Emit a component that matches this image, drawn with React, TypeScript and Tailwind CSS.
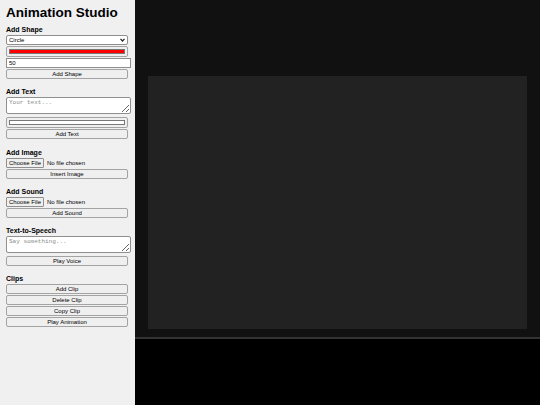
import React, { useState } from 'react';

const font = { fontFamily: '"Liberation Sans", Arial, sans-serif' };
const mono = { fontFamily: '"Liberation Mono", "DejaVu Sans Mono", monospace' };

const btn =
  'block w-[122px] h-[10px] leading-none text-[6px] text-black bg-[#efefef] border border-[#a3a3a3] rounded-[2px]';

const Heading: React.FC<{ children: React.ReactNode }> = ({ children }) => (
  <h3 className="text-[7px] font-bold leading-[8px] h-[8px] mb-[1px] text-black">{children}</h3>
);

const FilePicker: React.FC<{ accept: string }> = ({ accept }) => (
  <input
    type="file"
    accept={accept}
    className="block h-[10px] w-[122px] text-[6px] leading-none text-black mb-[1px] file:mr-[3px] file:h-[10px] file:px-[2px] file:text-[6px] file:leading-none file:bg-[#efefef] file:border file:border-solid file:border-[#8f8f8f] file:rounded-[1px]"
  />
);

const Sidebar: React.FC = () => {
  const [shape, setShape] = useState('circle');
  const [size, setSize] = useState('50');

  return (
    <aside className="w-[135px] shrink-0 h-full bg-[#f0f0f0] px-[6px] pt-[6px] overflow-hidden" style={font}>
      <h1 className="text-[13.5px] font-bold leading-[13px] h-[13px] mb-[7px] text-black">Animation Studio</h1>

      {/* Shape tools */}
      <section className="mb-[9px]">
        <Heading>Add Shape</Heading>
        <div className="relative w-[122px] h-[10px] mb-[1px]">
          <select
            value={shape}
            onChange={(e) => setShape(e.target.value)}
            className="appearance-none block w-full h-full text-[6px] leading-none py-0 pl-[2px] pr-[10px] bg-white border border-[#8f8f8f] rounded-[2px]"
          >
            <option value="circle">Circle</option>
            <option value="rect">Rectangle</option>
            <option value="triangle">Triangle</option>
          </select>
          <svg
            className="absolute right-[3px] top-[3px] w-[5px] h-[4px] pointer-events-none"
            viewBox="0 0 5 4"
            fill="none"
            stroke="#222"
            strokeWidth="1.2"
          >
            <path d="M0.5 0.8 L2.5 3 L4.5 0.8" />
          </svg>
        </div>
        <div className="w-[122px] h-[11px] p-[2px] bg-[#efefef] border border-[#a3a3a3] rounded-[2px] mb-[1px]">
          <div className="w-full h-full bg-[#ff0000] border border-[#777]" />
        </div>
        <input
          type="number"
          value={size}
          onChange={(e) => setSize(e.target.value)}
          className="block w-[125px] h-[10px] text-[6px] leading-none px-[2px] bg-white border border-[#8f8f8f] mb-[1px]"
        />
        <button className={btn}>Add Shape</button>
      </section>

      {/* Text tools */}
      <section className="mb-[10px]">
        <Heading>Add Text</Heading>
        <textarea
          placeholder="Your text..."
          className="block w-[125px] h-[17px] text-[6px] leading-[8px] px-[2px] py-[1px] bg-white border border-[#8f8f8f] rounded-[2px] mb-[3px] placeholder:text-[#8a8a8a] resize-y"
          style={mono}
        />
        <div className="w-[122px] h-[11px] p-[2px] bg-[#efefef] border border-[#a3a3a3] rounded-[2px] mb-[1px]">
          <div className="w-full h-full bg-white border border-[#777]" />
        </div>
        <button className={btn}>Add Text</button>
      </section>

      <section className="mb-[9px]">
        <Heading>Add Image</Heading>
        <FilePicker accept="image/*" />
        <button className={btn}>Insert Image</button>
      </section>

      <section className="mb-[9px]">
        <Heading>Add Sound</Heading>
        <FilePicker accept="audio/*" />
        <button className={btn}>Add Sound</button>
      </section>

      <section className="mb-[9px]">
        <Heading>Text-to-Speech</Heading>
        <textarea
          placeholder="Say something..."
          className="block w-[125px] h-[17px] text-[6px] leading-[8px] px-[2px] py-[1px] bg-white border border-[#8f8f8f] rounded-[2px] mb-[3px] placeholder:text-[#8a8a8a] resize-y"
          style={mono}
        />
        <button className={btn}>Play Voice</button>
      </section>

      <section>
        <Heading>Clips</Heading>
        <div className="flex flex-col gap-[1px]">
          <button className={btn}>Add Clip</button>
          <button className={btn}>Delete Clip</button>
          <button className={btn}>Copy Clip</button>
          <button className={btn}>Play Animation</button>
        </div>
      </section>
    </aside>
  );
};

export default function App() {
  return (
    <div className="w-[540px] h-[405px] flex overflow-hidden">
      <Sidebar />
      <main className="flex-1 flex flex-col">
        {/* stage */}
        <div className="h-[337px] bg-[#111111] pt-[76px] px-[13px] pb-[8px]">
          <div className="w-full h-full bg-[#222222]" />
        </div>
        {/* timeline */}
        <div className="flex-1 bg-black border-t-2 border-[#333333]" />
      </main>
    </div>
  );
}
